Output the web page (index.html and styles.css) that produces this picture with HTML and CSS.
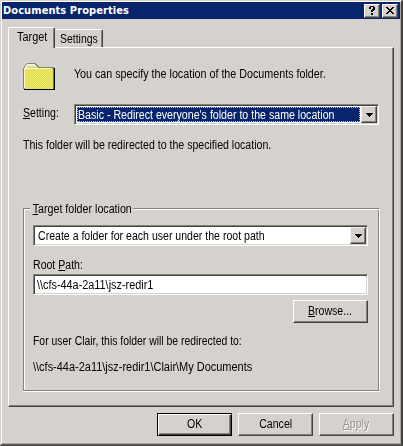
FILE: index.html
```html
<!DOCTYPE html>
<html lang="en">
<head>
<meta charset="utf-8">
<title>Documents Properties</title>
<link rel="stylesheet" href="styles.css">
</head>
<body>
<div class="window">
  <header class="titlebar">
    <h1>Documents Properties</h1>
    <button class="caption help" aria-label="Help"><svg width="8" height="10" viewBox="0 0 8 10" shape-rendering="crispEdges"><path d="M1 1h1V0h4v1h1v3H6v1H5v1H3V4h1V3h1V1H3v2H1zM3 7h2v2H3z"/></svg></button>
    <button class="caption" aria-label="Close"><svg width="8" height="7" viewBox="0 0 8 7" shape-rendering="crispEdges"><path d="M0 0h2v1h1v1h2V1h1V0h2v1H7v1H6v1H5v1h1v1h1v1h1v1H6V6H5V5H3v1H2v1H0V6h1V5h1V4h1V3H2V2H1V1H0z"/></svg></button>
  </header>
  <nav class="tabs">
    <div class="tab active"><span class="t-target">Target</span></div>
    <div class="tab"><span class="t-settings">Settings</span></div>
  </nav>
  <main class="panel">
    <div class="intro">
      <svg class="folder" width="33" height="28" viewBox="0 0 33 28" shape-rendering="crispEdges">
        <defs><pattern id="dither" width="2" height="2" patternUnits="userSpaceOnUse"><rect width="2" height="2" fill="#dfde3c"/><path d="M0 0h1v1H0zM1 1h1v1H1z" fill="#eaea7c"/></pattern></defs>
        <path d="M0 26V5h1V3h1V2h1V1h1V0h9v1h1v1h1v1h1v1h15v22z" fill="#85856a"/>
        <path d="M1 25V5h1V3h1V2h1V1h8v1h1v1h1v1h1v1h14v20z" fill="#f7f7d2"/>
        <path d="M2 6h28v20H2z" fill="url(#dither)"/>
        <path d="M4 3h9v1h2v1H4z" fill="#d9d9b0"/>
        <path d="M1 26h29V5h2v22H1z" fill="#000"/>
        <path d="M30 5h1v21h-1z" fill="#77772c"/>
      </svg>
      <p class="t-intro">You can specify the location of the Documents folder.</p>
    </div>
    <div class="setting">
      <label><span class="t-setting"><u>S</u>etting:</span></label>
      <div class="combo">
        <div class="value selected"><span class="t-basic">Basic - Redirect everyone's folder to the same location</span></div>
        <div class="drop"><svg width="7" height="4" viewBox="0 0 7 4" shape-rendering="crispEdges"><path d="M0 0h7v1H6v1H5v1H4v1H3V3H2V2H1V1H0z"/></svg></div>
      </div>
    </div>
    <p class="note t-note">This folder will be redirected to the specified location.</p>
    <section class="group">
      <div class="legend"><span class="t-legend"><u>T</u>arget folder location</span></div>
      <div class="combo">
        <div class="value"><span class="t-create">Create a folder for each user under the root path</span></div>
        <div class="drop"><svg width="7" height="4" viewBox="0 0 7 4" shape-rendering="crispEdges"><path d="M0 0h7v1H6v1H5v1H4v1H3V3H2V2H1V1H0z"/></svg></div>
      </div>
      <label class="root"><span class="t-root">Root <u>P</u>ath:</span></label>
      <div class="combo"><div class="value"><span class="t-path">\\cfs-44a-2a11\jsz-redir1</span></div></div>
      <button class="btn browse"><span class="t-browse"><u>B</u>rowse...</span></button>
      <p class="result t-result">For user Clair, this folder will be redirected to:</p>
      <p class="full t-full">\\cfs-44a-2a11\jsz-redir1\Clair\My Documents</p>
    </section>
  </main>
  <footer class="actions">
    <button class="btn default"><span class="t-button">OK</span></button>
    <button class="btn"><span class="t-button">Cancel</span></button>
    <button class="btn disabled"><span class="t-button"><u>A</u>pply</span></button>
  </footer>
</div>
</body>
</html>
```
FILE: styles.css
```css
* { box-sizing: border-box; }
body {
  margin: 0;
  background: #d5d2cd;
  color: #000;
  font: 12px/14px "Liberation Sans", Arial, sans-serif;
}
p, h1 { margin: 0; }
p, span, h1 { white-space: nowrap; }
span { display: inline-block; }
u { text-decoration: underline; text-decoration-thickness: 1px; text-underline-offset: 1px; text-decoration-skip-ink: none; }
svg { display: block; flex: none; }

/* Narrow dialog lettering */
[class*="t-"] { transform-origin: 0 0; }
.t-target { transform: scaleX(.91); }
.t-settings { transform: scaleX(.87); }
.t-intro { transform: scaleX(.894); }
.t-setting { transform: scaleX(.88); }
.t-basic { transform: scaleX(.885); }
.t-note { transform: scaleX(.882); }
.t-legend { transform: scaleX(.89); }
.t-create { transform: scaleX(.88); }
.t-root { transform: scaleX(.88); }
.t-path { transform: scaleX(.905); }
.t-result { transform: scaleX(.867); }
.t-full { transform: scaleX(.914); }
.t-browse, .t-button { transform: scaleX(.88); transform-origin: 50% 0; }

.window {
  width: 403px;
  height: 446px;
  padding: 1px 1px 0 0;
  border: 1px solid #d5d2cd;
  border-right: 2px solid #45433f;
  border-bottom: 2px solid #55534f;
  box-shadow: inset 1px 1px #fff, inset -1px -1px #aaa7a2;
}

.titlebar {
  display: flex;
  align-items: center;
  height: 17px;
  margin: 0 0 0 1px;
  padding-right: 2px;
  background: #08246b;
  color: #fff;
}
.titlebar h1 {
  flex: 1;
  padding-left: 1px;
  font: bold 11px/16px "DejaVu Sans Condensed", "DejaVu Sans", sans-serif;
  font-stretch: condensed;
  letter-spacing: .08px;
}
.caption {
  display: flex;
  align-items: center;
  justify-content: center;
  width: 16px;
  height: 14px;
  padding: 0;
  border: 1px solid;
  border-color: #fff #45433f #45433f #fff;
  background: #d5d2cd;
  box-shadow: inset -1px -1px #858279;
}
.help { margin-right: 2px; }

.tabs {
  display: flex;
  align-items: flex-end;
  height: 28px;
  padding-left: 7px;
}
.tab {
  width: 48px;
  height: 18px;
  padding: 2px 0 0 5px;
  border-top: 1px solid #fff;
  border-right: 1px solid #45433f;
  border-radius: 2px 2px 0 0;
  box-shadow: inset -1px 0 #858279;
}
.tab.active {
  position: relative;
  width: 47px;
  height: 21px;
  margin-bottom: -1px;
  padding: 2px 0 0 8px;
  border-left: 1px solid #fff;
  background: #d5d2cd;
}

.panel {
  width: 386px;
  height: 360px;
  margin-left: 7px;
  padding: 16px 13px 0 14px;
  border: 1px solid;
  border-color: #fff #45433f #45433f #fff;
  box-shadow: inset -1px -1px #858279;
}
.intro { display: flex; height: 40px; }
.folder { margin-top: -1px; }
.intro p { padding: 3px 0 0 20px; }
.setting { display: flex; height: 34px; }
.setting label { flex: none; width: 51px; padding-top: 2px; }
.setting .combo { flex: none; width: 305px; }

.combo {
  display: flex;
  height: 21px;
  padding: 1px;
  border: 1px solid;
  border-color: #858279 #fff #fff #858279;
  background: #fff;
  box-shadow: inset 1px 1px #45433f, inset -1px -1px #d5d2cd;
}
.value { flex: 1; min-width: 0; padding: 2px 0 0 3px; }
.value.selected {
  margin: 1px 0 1px 1px;
  padding: 1px 0 0 1px;
  background: #08246b;
  color: #fff;
  outline: 1px dotted #d8c876;
  outline-offset: -1px;
}
.drop {
  display: flex;
  flex: none;
  align-items: center;
  justify-content: center;
  width: 16px;
  margin-left: 1px;
  border: 1px solid;
  border-color: #f4f2ee #45433f #45433f #f4f2ee;
  background: #d5d2cd;
  box-shadow: inset -1px -1px #858279;
}

.group {
  width: 357px;
  height: 183px;
  margin-top: 56px;
  padding: 0 11px 0 9px;
  border: 1px solid;
  border-color: #858279 #fff #858279 #858279;
  box-shadow: inset 1px 1px #fff, inset -1px 0 #858279, 0 1px #fff;
}
.legend { height: 16px; margin: -8px 0 0 -3px; }
.legend span { padding: 1px 2px 0 3px; background: #d5d2cd; }
.group .combo { margin-top: 8px; }
.root { display: block; height: 14px; margin-top: 12px; }
.root + .combo { margin-top: 2px; }
.root + .combo .value { padding-left: 2px; }

.btn {
  display: flex;
  align-items: center;
  justify-content: center;
  width: 75px;
  height: 23px;
  padding: 0 0 1px;
  border: 1px solid;
  border-color: #fff #45433f #45433f #fff;
  background: #d5d2cd;
  box-shadow: inset -1px -1px #858279;
  color: inherit;
  font: inherit;
}
.browse { margin: 5px 0 0 auto; }
.result { margin-top: 11px; }
.full { margin-top: 12px; }
.actions { display: flex; justify-content: flex-end; gap: 6px; padding: 6px 6px 0 0; }
.btn.default {
  border-color: #000;
  box-shadow: inset 1px 1px #fff, inset -1px -1px #45433f, inset -2px -2px #858279;
}
.btn.disabled { color: #96938d; text-shadow: 1px 1px #fff; }
```
